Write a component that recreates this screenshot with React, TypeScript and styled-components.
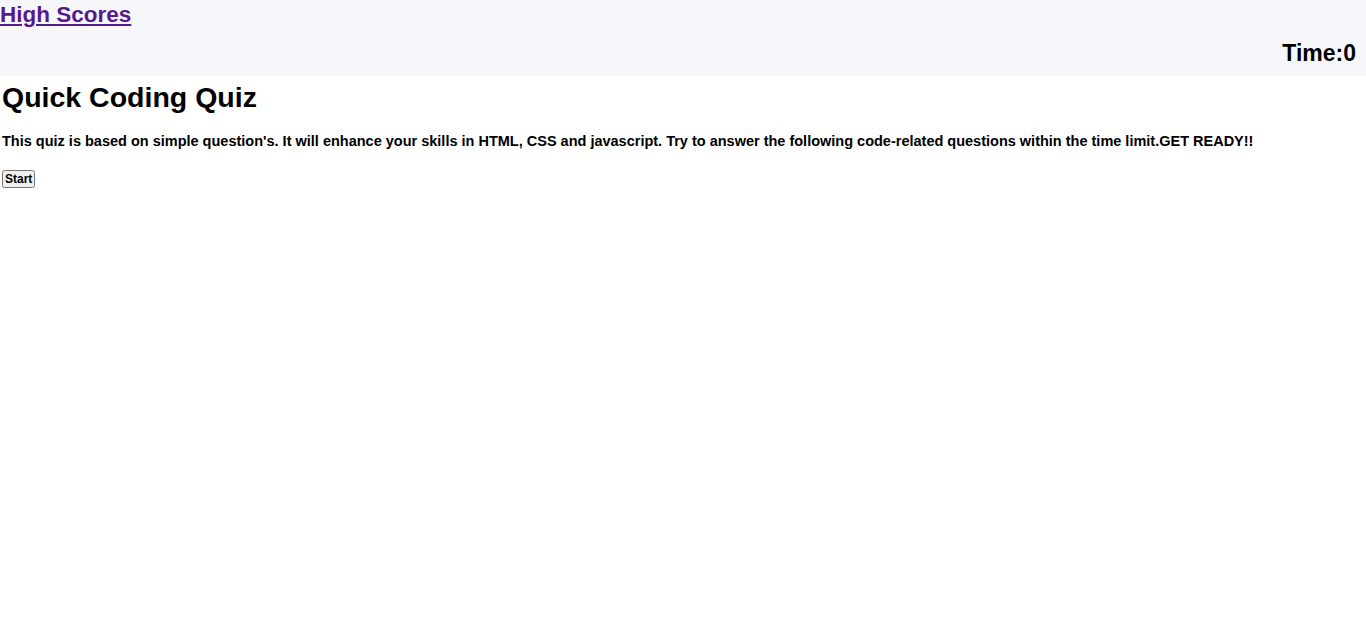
import React from "react"
import styled, { createGlobalStyle } from "styled-components"

const GlobalStyle = createGlobalStyle`
  body {
    margin: 0;
    background: #ffffff;
    font-family: "Liberation Sans", Arial, sans-serif;
  }
`

const App: React.FC = () => {
  return (
    <>
      <GlobalStyle />
      <Header>
        <ScoresLink href="#">High Scores</ScoresLink>
        <Timer>Time:0</Timer>
      </Header>
      <Main>
        <Title>Quick Coding Quiz</Title>
        <Intro>
          This quiz is based on simple question's. It will enhance your skills in HTML, CSS and
          javascript. Try to answer the following code-related questions within the time
          limit.GET READY!!
        </Intro>
        <StartButton>Start</StartButton>
      </Main>
    </>
  )
}

const Header = styled.header`
  display: flex;
  flex-direction: column;
  height: 76px;
  box-sizing: border-box;
  background: #f7f7fb;
`

const ScoresLink = styled.a`
  font-size: 22.5px;
  font-weight: bold;
  color: #551a8b;
  line-height: 30px;
  align-self: flex-start;
`

const Timer = styled.div`
  align-self: flex-end;
  margin-top: 9px;
  padding-right: 10px;
  font-size: 23px;
  font-weight: bold;
  line-height: 28px;
`

const Main = styled.main`
  padding: 0 2px;
`

const Title = styled.h1`
  margin: 3px 0 0;
  font-size: 28.5px;
  line-height: 36px;
`

const Intro = styled.p`
  margin: 17px 0 0;
  font-size: 14.5px;
  font-weight: bold;
  line-height: 18px;
`

const StartButton = styled.button`
  display: block;
  margin-top: 20px;
  font-family: inherit;
  font-size: 12px;
  font-weight: bold;
  line-height: 12px;
  padding: 1px 1px;
`

export default App
